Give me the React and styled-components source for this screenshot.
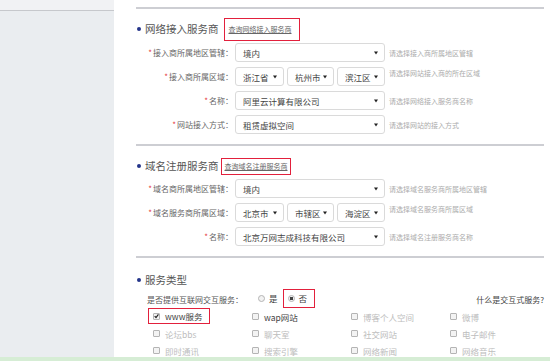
import React from "react";
import styled, { createGlobalStyle } from "styled-components";

// global reset
const GlobalStyle = createGlobalStyle`
  html, body {
    margin: 0;
    padding: 0;
    background: #fff;
  }
  body {
    font-family: "Noto Sans CJK SC", "Noto Sans", sans-serif;
    color: #333;
  }
`;

// data
const accessRows = [
  { label: "接入商所属地区管辖：", selects: [{ w: 150, v: "境内" }], help: "请选择接入商所属地区管辖" },
  {
    label: "接入商所属区域：",
    selects: [{ w: 49, v: "浙江省" }, { w: 47, v: "杭州市" }, { w: 48, v: "滨江区" }],
    help: "请选择网站接入商的所在区域",
    raised: true,
  },
  { label: "名称：", selects: [{ w: 150, v: "阿里云计算有限公司" }], help: "请选择网络接入服务商名称" },
  { label: "网站接入方式：", selects: [{ w: 150, v: "租赁虚拟空间" }], help: "请选择网站的接入方式" },
];

const domainRows = [
  { label: "域名商所属地区管辖：", selects: [{ w: 150, v: "境内" }], help: "请选择域名服务商所属地区管辖" },
  {
    label: "域名服务商所属区域：",
    selects: [{ w: 49, v: "北京市" }, { w: 47, v: "市辖区" }, { w: 48, v: "海淀区" }],
    help: "请选择域名服务商所属区域",
    raised: true,
  },
  { label: "名称：", selects: [{ w: 150, v: "北京万网志成科技有限公司" }], help: "请选择域名注册服务商名称" },
];

const services = [
  { name: "www服务", checked: true, mark: true },
  { name: "wap网站" },
  { name: "博客个人空间", disabled: true },
  { name: "微博", disabled: true },
  { name: "论坛bbs", disabled: true },
  { name: "聊天室", disabled: true },
  { name: "社交网站", disabled: true },
  { name: "电子邮件", disabled: true },
  { name: "即时通讯", disabled: true },
  { name: "搜索引擎", disabled: true },
  { name: "网络新闻", disabled: true },
  { name: "网络音乐", disabled: true },
];

function Arrow() {
  return (
    <svg width="4" height="4" viewBox="0 0 4 4">
      <path d="M0 0.5 L4 0.5 L2 3.5 Z" fill="#222" />
    </svg>
  );
}

function FieldRows({ rows, top }) {
  return rows.map((r, i) => (
    <FormRow key={r.label + i} top={i === 0 ? top : 5}>
      <Label>
        <Star>*</Star>
        {r.label}
      </Label>
      <SelectGroup>
        {r.selects.map((s) => (
          <Select key={s.v} w={s.w}>
            <span>{s.v}</span>
            <Arrow />
          </Select>
        ))}
      </SelectGroup>
      <Help raised={r.raised}>{r.help}</Help>
    </FormRow>
  ));
}

function App() {
  return (
    <>
      <GlobalStyle />
      <Page>
        <Body>
          <Sidebar>
            <SidebarTop />
          </Sidebar>
          <Main>
            <Divider top={0} />

            <SectionHeader top={9}>
              <Bullet />
              <Title>网络接入服务商</Title>
              <LinkBox gap={5} padL={4} padR={7} h={23}>
                <LinkText>查询网络接入服务商</LinkText>
              </LinkBox>
            </SectionHeader>
            <FieldRows rows={accessRows} top={3} />

            <Divider top={10} />

            <SectionHeader top={9}>
              <Bullet />
              <Title>域名注册服务商</Title>
              <LinkBox gap={2} padL={3} padR={2} h={17}>
                <LinkText>查询域名注册服务商</LinkText>
              </LinkBox>
            </SectionHeader>
            <FieldRows rows={domainRows} top={2} />

            <Divider top={10} />

            <SectionHeader top={11}>
              <Bullet />
              <Title>服务类型</Title>
            </SectionHeader>
            <InteractiveRow>
              <Question>是否提供互联网交互服务：</Question>
              <RadioOption>
                <Radio />
                是
              </RadioOption>
              <RadioOption marked>
                <Radio checked />
                否
              </RadioOption>
              <WhatIs>什么是交互式服务?</WhatIs>
            </InteractiveRow>
            <CheckGrid>
              {services.map((s) => (
                <CheckItem key={s.name} disabled={s.disabled} marked={s.mark}>
                  <Checkbox>
                    {s.checked && (
                      <svg width="6" height="6" viewBox="0 0 6 6">
                        <path d="M0.8 3.2 L2.4 4.8 L5.3 1" stroke="#222" strokeWidth="1.4" fill="none" />
                      </svg>
                    )}
                  </Checkbox>
                  {s.name}
                </CheckItem>
              ))}
            </CheckGrid>
          </Main>
        </Body>
        <Footer />
      </Page>
    </>
  );
}

// css styles
const Page = styled.div`
  width: 550px;
  height: 361px;
  overflow: hidden;
  display: flex;
  flex-direction: column;
`;

const Body = styled.div`
  display: flex;
  height: 357px;
  flex-shrink: 0;
`;

const Footer = styled.div`
  height: 20px;
  flex-shrink: 0;
  background: #d6edd5;
`;

const Sidebar = styled.div`
  width: 114px;
  flex-shrink: 0;
  background: #eaedf0;
`;

const SidebarTop = styled.div`
  height: 10px;
  background: #f1f2f4;
  border-bottom: 1px solid #c6c8cc;
`;

const Main = styled.div`
  flex: 1;
  padding: 7px 7px 0 22px;
  background: #fff;
`;

const Divider = styled.div`
  height: 2px;
  margin-top: ${(p) => p.top}px;
  background: #cdced3;
`;

const SectionHeader = styled.div`
  display: flex;
  align-items: center;
  height: 22px;
  margin-top: ${(p) => p.top}px;
`;

const Bullet = styled.span`
  width: 4px;
  height: 4px;
  border-radius: 50%;
  background: #24348a;
  margin: 0 4px 0 1px;
`;

const Title = styled.span`
  font-size: 10.5px;
  color: #555;
  line-height: 1;
`;

const LinkBox = styled.span`
  display: flex;
  align-items: center;
  box-sizing: border-box;
  height: ${(p) => p.h}px;
  margin-left: ${(p) => p.gap}px;
  padding: 0 ${(p) => p.padR}px 0 ${(p) => p.padL}px;
  border: 1.5px solid #e2203c;
`;

const LinkText = styled.span`
  font-size: 7px;
  color: #666;
  text-decoration: underline;
  line-height: 1;
`;

const FormRow = styled.div`
  display: flex;
  align-items: center;
  height: 19px;
  margin-top: ${(p) => p.top}px;
`;

const Label = styled.div`
  width: 99px;
  box-sizing: border-box;
  padding-right: 2px;
  text-align: right;
  font-size: 8px;
  color: #666;
  white-space: nowrap;
`;

const Star = styled.span`
  color: #e4393c;
  margin-right: 1px;
`;

const SelectGroup = styled.div`
  display: flex;
  gap: 3px;
`;

const Select = styled.div`
  width: ${(p) => p.w}px;
  height: 19px;
  box-sizing: border-box;
  display: flex;
  align-items: center;
  justify-content: space-between;
  padding: 0 6px 0 7px;
  border: 1px solid #dadada;
  border-radius: 3px;
  background: #fff;
  font-size: 8.5px;
  color: #444;
  white-space: nowrap;
`;

const Help = styled.div`
  margin-left: 4px;
  font-size: 7px;
  color: #ababab;
  white-space: nowrap;
  align-self: ${(p) => (p.raised ? "flex-start" : "center")};
  margin-top: ${(p) => (p.raised ? 1 : 0)}px;
`;

const InteractiveRow = styled.div`
  display: flex;
  align-items: center;
  height: 17px;
  padding-left: 11px;
  font-size: 8px;
  color: #555;
`;

const Question = styled.span`
  white-space: nowrap;
  margin-right: 14px;
`;

const RadioOption = styled.span`
  display: flex;
  align-items: center;
  gap: 4px;
  box-sizing: border-box;
  height: 19px;
  padding: 0 ${(p) => (p.marked ? 7 : 4)}px 0 ${(p) => (p.marked ? 4 : 0)}px;
  border: 1.5px solid ${(p) => (p.marked ? "#e2203c" : "transparent")};
  margin-top: -3px;
  font-size: 8.5px;
  color: #444;
`;

const Radio = styled.span`
  width: 7px;
  height: 7px;
  box-sizing: border-box;
  border-radius: 50%;
  border: 1px solid #b4b4b4;
  background: ${(p) => (p.checked ? "radial-gradient(circle, #444 0 1.6px, #f2f2f2 2px)" : "#f2f2f2")};
`;

const WhatIs = styled.span`
  margin-left: auto;
  color: #444;
  white-space: nowrap;
`;

const CheckGrid = styled.div`
  display: grid;
  grid-template-columns: repeat(4, 99px);
  grid-auto-rows: 17px;
  padding-left: 12px;
`;

const CheckItem = styled.div`
  display: flex;
  align-items: center;
  gap: 5px;
  box-sizing: border-box;
  width: ${(p) => (p.marked ? "62px" : "auto")};
  height: ${(p) => (p.marked ? "16px" : "17px")};
  padding-left: 4px;
  border: 1.5px solid ${(p) => (p.marked ? "#e2203c" : "transparent")};
  font-size: 8.5px;
  color: ${(p) => (p.disabled ? "#bdbdbd" : "#444")};
  white-space: nowrap;
`;

const Checkbox = styled.span`
  width: 7px;
  height: 7px;
  box-sizing: border-box;
  display: flex;
  align-items: center;
  justify-content: center;
  border: 1px solid #b4b4b4;
  border-radius: 1px;
  background: #f3f3f3;
`;

// Export Default
export default App;
